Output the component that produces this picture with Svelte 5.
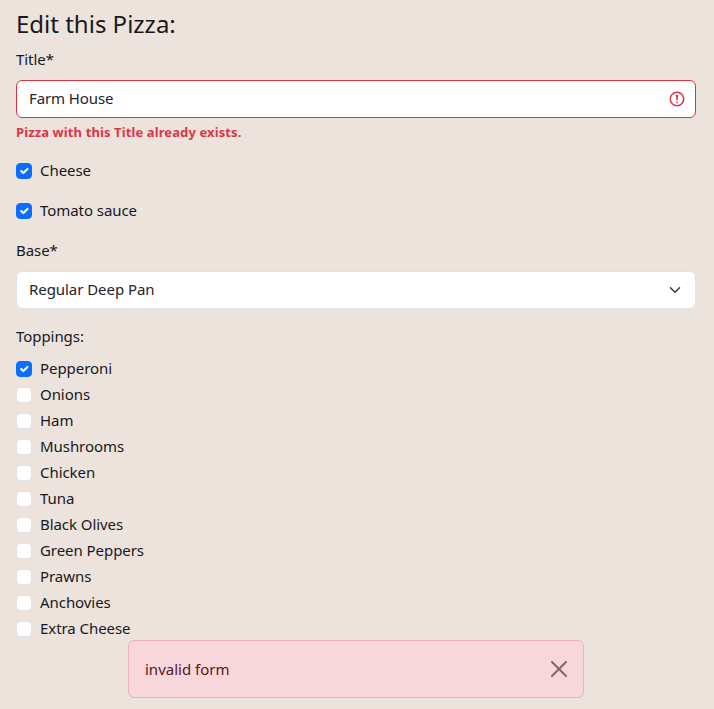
<script>
  let title = $state('Farm House');
  let extras = $state([
    { name: 'Cheese', on: true },
    { name: 'Tomato sauce', on: true }
  ]);
  let toppings = $state([
    { name: 'Pepperoni', on: true },
    { name: 'Onions', on: false },
    { name: 'Ham', on: false },
    { name: 'Mushrooms', on: false },
    { name: 'Chicken', on: false },
    { name: 'Tuna', on: false },
    { name: 'Black Olives', on: false },
    { name: 'Green Peppers', on: false },
    { name: 'Prawns', on: false },
    { name: 'Anchovies', on: false },
    { name: 'Extra Cheese', on: false }
  ]);
  let showAlert = $state(true);
</script>

{#snippet check(item)}
  <label class="check">
    <input type="checkbox" bind:checked={item.on} />
    <span class="box" class:on={item.on}>
      {#if item.on}
        <svg viewBox="0 0 20 20"><path fill="none" stroke="#fff" stroke-linecap="round" stroke-linejoin="round" stroke-width="3" d="m6 10 3 3 6-6" /></svg>
      {/if}
    </span>
    <span>{item.name}</span>
  </label>
{/snippet}

<main>
  <h4>Edit this Pizza:</h4>
  <form>
    <label class="label" for="title">Title*</label>
    <div class="control invalid">
      <input id="title" type="text" bind:value={title} />
      <svg class="warn" viewBox="0 0 12 12" fill="none" stroke="#dc3545">
        <circle cx="6" cy="6" r="4.5" />
        <path stroke-linejoin="round" d="M5.8 3.6h.4L6 6.5z" />
        <circle cx="6" cy="8.2" r=".6" fill="#dc3545" stroke="none" />
      </svg>
    </div>
    <strong class="feedback">Pizza with this Title already exists.</strong>

    {#each extras as item}
      <div class="single">{@render check(item)}</div>
    {/each}

    <span class="label">Base*</span>
    <div class="control select">
      <span>Regular Deep Pan</span>
      <svg class="caret" viewBox="0 0 16 16"><path fill="none" stroke="#343a40" stroke-linecap="round" stroke-linejoin="round" stroke-width="2" d="m2 5 6 6 6-6" /></svg>
    </div>

    <span class="label">Toppings:</span>
    <div class="toppings">
      {#each toppings as item}
        {@render check(item)}
      {/each}
    </div>
  </form>
</main>

{#if showAlert}
  <div class="alert" role="alert">
    <span>invalid form</span>
    <button aria-label="Close" onclick={() => (showAlert = false)}>
      <svg viewBox="0 0 16 16"><path d="M.293.293a1 1 0 0 1 1.414 0L8 6.586 14.293.293a1 1 0 1 1 1.414 1.414L9.414 8l6.293 6.293a1 1 0 0 1-1.414 1.414L8 9.414l-6.293 6.293a1 1 0 0 1-1.414-1.414L6.586 8 .293 1.707a1 1 0 0 1 0-1.414z" /></svg>
    </button>
  </div>
{/if}

<style>
  :global(body) {
    background: #ece3dd;
    overflow: hidden;
  }
  :global(*) {
    box-sizing: border-box;
  }
  main, .alert {
    font: 15px/24px 'Noto Sans', 'Open Sans', sans-serif;
    color: #17191c;
  }
  main {
    padding: 5px 18px 0 16px;
    border-top: 4px solid #ece2d8;
    letter-spacing: -0.06px;
  }
  h4 {
    margin: 0 0 8px;
    font-size: 24px;
    font-weight: 400;
    line-height: 30px;
    letter-spacing: 0;
  }
  .label {
    display: block;
    margin-bottom: 9px;
  }
  .control {
    display: flex;
    align-items: center;
    height: 38px;
    padding: 0 9px 0 12px;
    background: #fff;
    border: 1px solid #dee2e6;
    border-radius: 6px;
  }
  .invalid {
    border-color: #dc3545;
  }
  .control input {
    flex: 1;
    min-width: 0;
    padding: 0 0 2px;
    border: 0;
    outline: 0;
    background: none;
    color: #212529;
    font: inherit;
    letter-spacing: -0.1px;
  }
  .warn {
    width: 18px;
    height: 18px;
  }
  .select {
    justify-content: space-between;
    margin-bottom: 15px;
    padding-right: 14px;
    color: #212529;
  }
  .select span {
    padding-bottom: 2px;
  }
  .caret {
    width: 12px;
    height: 12px;
  }
  .feedback {
    display: block;
    margin: 4px 0 15px;
    color: #dc3545;
    font-size: 13px;
    line-height: 21px;
    letter-spacing: 0.11px;
  }
  .single {
    margin-bottom: 16px;
  }
  .check {
    display: flex;
    align-items: center;
    gap: 8px;
    width: max-content;
    height: 24px;
  }
  .check input {
    position: absolute;
    opacity: 0;
  }
  .toppings {
    margin-top: -1px;
  }
  .toppings .check {
    margin-bottom: 2px;
  }
  .box {
    width: 16px;
    height: 16px;
    margin-top: 2px;
    background: #fff;
    border: 1px solid #dee2e6;
    border-radius: 4px;
  }
  .box.on {
    background: #0d6efd;
    border-color: #0d6efd;
  }
  .box svg {
    display: block;
    width: 14px;
    height: 14px;
  }
  .alert {
    position: absolute;
    left: 128px;
    top: 640px;
    display: flex;
    align-items: center;
    justify-content: space-between;
    width: 456px;
    height: 58px;
    padding: 0 16px;
    background: #f8d7da;
    border: 1px solid #f1aeb5;
    border-radius: 6px;
    color: #58151c;
  }
  .alert button {
    padding: 0;
    border: 0;
    background: none;
    opacity: 0.5;
  }
  .alert svg {
    display: block;
    width: 16px;
    height: 16px;
  }
</style>
